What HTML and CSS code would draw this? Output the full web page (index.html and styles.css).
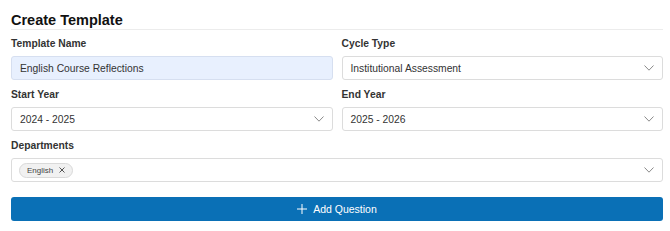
FILE: index.html
```html
<!DOCTYPE html>
<html lang="en">
<head>
  <meta charset="UTF-8" />
  <meta name="viewport" content="width=device-width, initial-scale=1" />
  <title>Create Template</title>
  <link rel="stylesheet" href="styles.css">
</head>
<body>
  <div class="container">
    <h1>Create Template</h1>

    <div class="grid">
      <div class="field">
        <label for="template-name">Template Name</label>
        <input type="text" id="template-name" class="control autofill" value="English Course Reflections" />
      </div>
      <div class="field">
        <label>Cycle Type</label>
        <div class="control select">
          <span>Institutional Assessment</span>
          <svg class="chevron" width="10" height="6" viewBox="0 0 10 6"><path d="M0.5 0.5 L5 5.2 L9.5 0.5" fill="none" stroke="#8a8a8a" stroke-width="1"/></svg>
        </div>
      </div>
      <div class="field">
        <label>Start Year</label>
        <div class="control select">
          <span>2024 - 2025</span>
          <svg class="chevron" width="10" height="6" viewBox="0 0 10 6"><path d="M0.5 0.5 L5 5.2 L9.5 0.5" fill="none" stroke="#8a8a8a" stroke-width="1"/></svg>
        </div>
      </div>
      <div class="field">
        <label>End Year</label>
        <div class="control select">
          <span>2025 - 2026</span>
          <svg class="chevron" width="10" height="6" viewBox="0 0 10 6"><path d="M0.5 0.5 L5 5.2 L9.5 0.5" fill="none" stroke="#8a8a8a" stroke-width="1"/></svg>
        </div>
      </div>
      <div class="field wide">
        <label>Departments</label>
        <div class="control select multi">
          <span class="chip">English
            <svg width="6" height="6" viewBox="0 0 6 6"><path d="M0.5 0.5 L5.5 5.5 M5.5 0.5 L0.5 5.5" stroke="#555" stroke-width="1"/></svg>
          </span>
          <svg class="chevron" width="10" height="6" viewBox="0 0 10 6"><path d="M0.5 0.5 L5 5.2 L9.5 0.5" fill="none" stroke="#8a8a8a" stroke-width="1"/></svg>
        </div>
      </div>
    </div>

    <button class="add-btn">
      <svg width="10" height="10" viewBox="0 0 10 10"><path d="M5 0 V10 M0 5 H10" stroke="#fff" stroke-width="1"/></svg>
      <span>Add Question</span>
    </button>
  </div>
</body>
</html>
```

FILE: styles.css
```css
* { box-sizing: border-box; }
body {
  margin: 0;
  background: #fff;
  font-family: 'Liberation Sans', Arial, sans-serif;
  color: #333;
}
.container {
  width: 652px;
  margin-left: 11px;
  padding-top: 12px;
}
h1 {
  margin: 0 0 8px;
  font-size: 14.5px;
  line-height: 16px;
  font-weight: bold;
  color: #111;
  padding-bottom: 1px;
  border-bottom: 1px solid #ececec;
}
.grid {
  display: grid;
  grid-template-columns: 1fr 1fr;
  column-gap: 9px;
  row-gap: 9px;
}
.field.wide {
  grid-column: 1 / 3;
}
label {
  display: block;
  font-size: 10.3px;
  line-height: 12px;
  font-weight: bold;
  color: #333;
  margin-bottom: 6px;
}
.control {
  width: 100%;
  height: 24px;
  border: 1px solid #dcdcdc;
  border-radius: 3px;
  padding: 0 8px;
  font-family: 'Liberation Sans', Arial, sans-serif;
  font-size: 10.3px;
  color: #333;
  background: #fff;
  outline: none;
}
.autofill {
  background: #e8f0fe;
  border-color: #d6dff0;
}
.select {
  display: flex;
  align-items: center;
  justify-content: space-between;
}
.multi {
  padding-left: 7px;
}
.chip {
  display: inline-flex;
  align-items: center;
  gap: 6px;
  height: 15px;
  padding: 0 7px 0 7px;
  border: 1px solid #d9d9d9;
  border-radius: 8px;
  background: #f1f1f1;
  font-size: 8px;
  color: #444;
}
.add-btn {
  margin-top: 15px;
  width: 100%;
  height: 24px;
  border: none;
  border-radius: 3px;
  background: #0a70b6;
  color: #fff;
  display: flex;
  align-items: center;
  justify-content: center;
  gap: 6px;
  font-family: 'Liberation Sans', Arial, sans-serif;
  font-size: 10.5px;
  cursor: pointer;
}
```
